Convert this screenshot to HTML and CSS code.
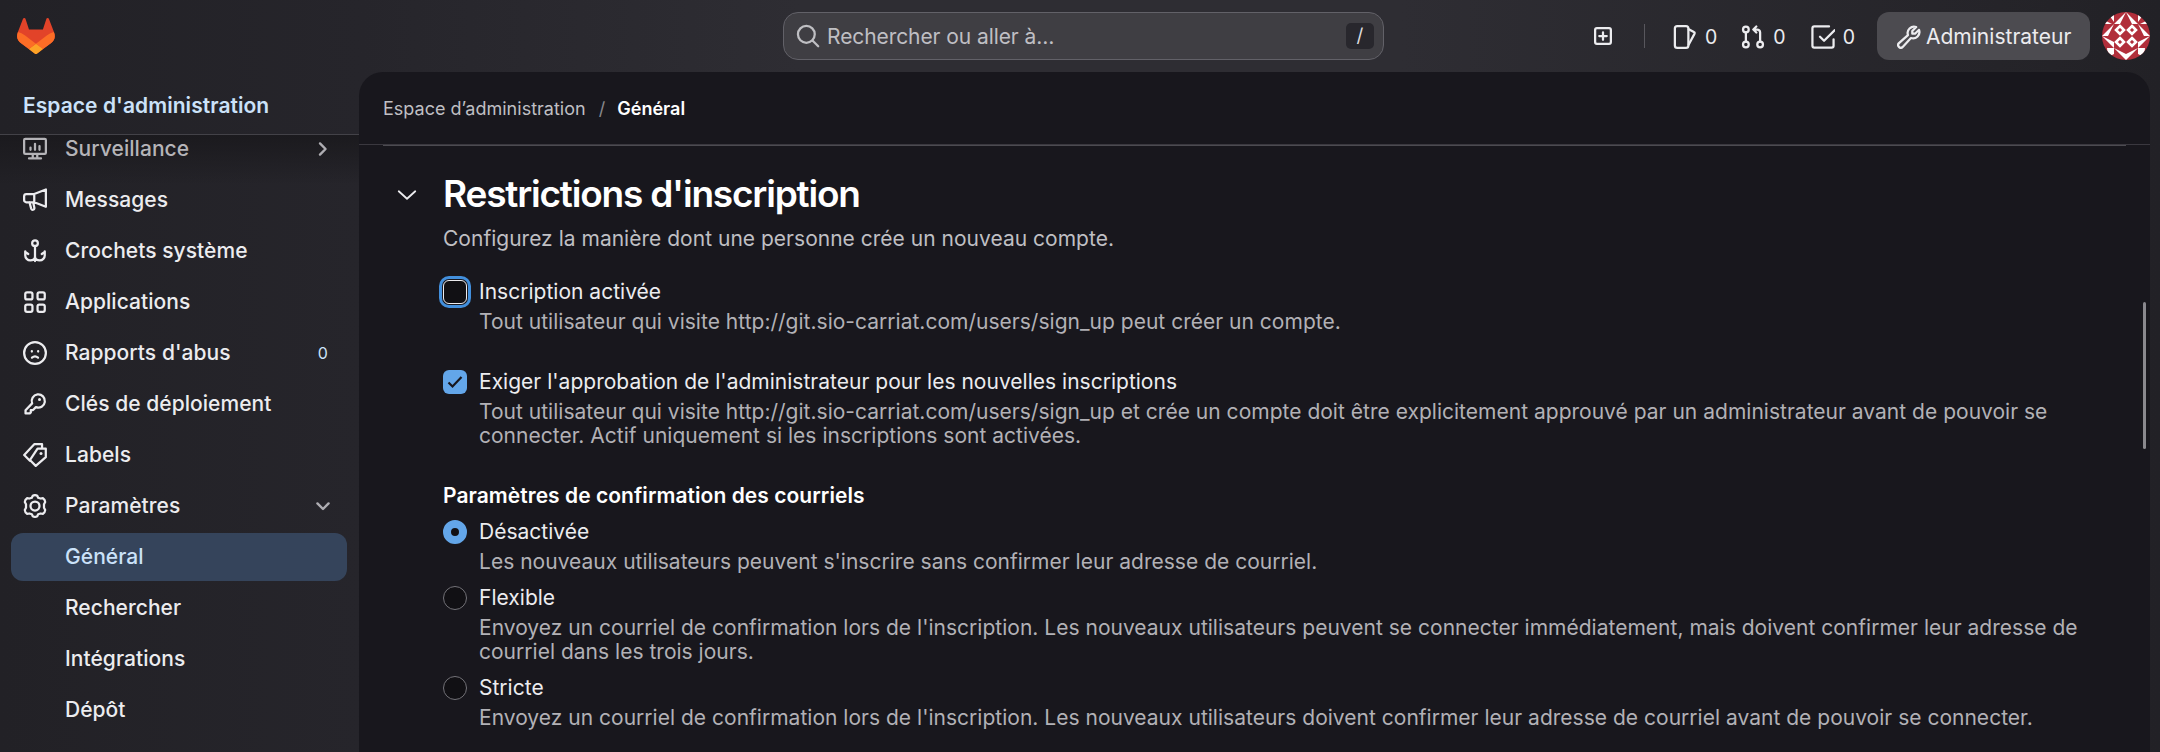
FILE: index.html
```html
<!DOCTYPE html>
<html lang="fr">
<head>
  <meta charset="UTF-8">
  <meta name="viewport" content="width=device-width, initial-scale=1.0">
  <title>Général · Espace d'administration · GitLab</title>
  <link rel="stylesheet" href="styles.css">
</head>
<body>
  <header class="topbar">
    <a class="logo" href="#">
      <svg viewBox="0 0 25 24" width="38" height="36"><path fill="#E24329" d="m24.507 9.5-.034-.09L21.082.562a.896.896 0 0 0-1.694.091l-2.29 7.01H7.825L5.535.653a.898.898 0 0 0-1.694-.09L.451 9.411.416 9.5a6.297 6.297 0 0 0 2.09 7.278l.012.01.03.022 5.16 3.867 2.56 1.935 1.554 1.176a1.051 1.051 0 0 0 1.268 0l1.555-1.176 2.56-1.935 5.197-3.89.014-.01A6.297 6.297 0 0 0 24.507 9.5Z"/><path fill="#FC6D26" d="m24.507 9.5-.034-.09a11.44 11.44 0 0 0-4.56 2.051l-7.447 5.632 4.742 3.584 5.197-3.89.014-.01A6.297 6.297 0 0 0 24.507 9.5Z"/><path fill="#FCA326" d="m7.707 20.677 2.56 1.935 1.555 1.176a1.051 1.051 0 0 0 1.268 0l1.555-1.176 2.56-1.935-4.743-3.584-4.755 3.584Z"/><path fill="#FC6D26" d="M5.01 11.461a11.43 11.43 0 0 0-4.56-2.05L.416 9.5a6.297 6.297 0 0 0 2.09 7.278l.012.01.03.022 5.16 3.867 4.745-3.584-7.444-5.632Z"/></svg>
    </a>
    <button class="search">
      <svg class="icon" viewBox="0 0 16 16"><circle cx="6.9" cy="6.9" r="5.6"/><path d="m11 11 3.8 3.8"/></svg>
      <span class="search-text">Rechercher ou aller à…</span>
      <kbd>/</kbd>
    </button>
    <div class="actions">
      <a class="plus" href="#"><svg class="icon" viewBox="0 0 16 16"><rect x="2.75" y="2.75" width="10.5" height="10.5" rx="1.2"/><path d="M8 5.5v5M5.5 8h5"/></svg></a>
      <span class="divider"></span>
      <a class="counter issues" href="#"><svg class="icon" viewBox="0 0 16 16"><rect x="1.25" y=".75" width="9" height="14.5" rx="1.6"/><path d="m10.5 2.8 3.4 1.9a.9.9 0 0 1 .4 1.2L10.5 13"/></svg>0</a>
      <a class="counter merges" href="#"><svg class="icon" viewBox="0 0 16 16"><circle cx="3.25" cy="3" r="1.9"/><circle cx="3.25" cy="13" r="1.9"/><circle cx="12.75" cy="13" r="1.9"/><path d="M3.25 4.9v6.2M12.75 11.1V5a2 2 0 0 0-2-2H8.6M10.2 1 8.2 3l2 2"/></svg>0</a>
      <a class="counter todos" href="#"><svg class="icon" viewBox="0 0 16 16"><path d="M12 .95H2.2A1.25 1.25 0 0 0 .95 2.2v11.6c0 .7.55 1.25 1.25 1.25h11.6c.7 0 1.25-.55 1.25-1.25V9.5M6 7.8l2.7 2.7 7-7"/></svg>0</a>
      <a class="admin" href="#"><svg class="icon" viewBox="0 0 16 16"><path d="M12.8 1.3a4.3 4.3 0 0 0-5.5 5.4L1.3 12.1a1.6 1.6 0 0 0 2.5 2.5l5.5-5.9a4.3 4.3 0 0 0 5.4-5.5L12 5.8h-1.8V4z"/></svg>Administrateur</a>
      <svg class="avatar" viewBox="0 0 48 48">
        <rect width="48" height="48" fill="#b12f3b"/>
        <g fill="#fff">
          <path d="M24 0 12 12h6zM24 0l12 12h-6zM12 36l12 6v6zM36 36l-12 6v6zM0 24h6l6-12zM48 24h-6l-6-12zM0 24l12 6v6zM48 24l-12 6v6z"/>
          <path d="M7 3l5-1v8zM2 8l8 4H1zM41 3l-5-1v8zM46 8l-8 4h9zM5 36h7v6l-6 3zM43 36h-7v6l6 3z"/>
        </g>
        <path fill="#b12f3b" stroke="#fff" stroke-width="2.6" d="m18 14 4 4-4 4-4-4zM30 14l4 4-4 4-4-4zM18 26l4 4-4 4-4-4zM30 26l4 4-4 4-4-4z"/>
      </svg>
    </div>
  </header>

  <div class="layout">
    <aside class="sidebar">
      <h2 class="sidebar-title">Espace d'administration</h2>
      <nav class="menu">
        <a class="item faded" href="#"><svg class="icon" viewBox="0 0 16 16"><rect x=".75" y="1.25" width="14.5" height="10" rx=".8"/><path d="M6.5 11.5V14M9.5 11.5V14M4 14.25h8M5 7v1.5M8 4.5v4M11 6v2.5"/></svg><span>Surveillance</span><svg class="chevron" viewBox="0 0 12 12"><path d="m4 2.3 3.7 3.7L4 9.7"/></svg></a>
        <a class="item" href="#"><svg class="icon" viewBox="0 0 16 16"><path d="M7.5 4 15.25 1v11.5L7.5 9.5H2.2A1.45 1.45 0 0 1 .75 8V5.5C.75 4.7 1.4 4 2.2 4zM7.5 4v5.5M4.3 9.5l1.2 4.4a1.1 1.1 0 0 0 2.1-.5L6.8 9.5"/></svg><span>Messages</span></a>
        <a class="item" href="#"><svg class="icon" viewBox="0 0 16 16"><circle cx="8" cy="2.75" r="1.9"/><path d="M8 4.7v10M1.5 8.2v2.6a3.4 3.4 0 0 0 3.4 3.5c1.7 0 3.1-1 3.1-2.6 0 1.6 1.4 2.6 3.1 2.6a3.4 3.4 0 0 0 3.4-3.5V8.2M1.5 8.7l2 1.3M14.5 8.7l-2 1.3"/></svg><span>Crochets système</span></a>
        <a class="item" href="#"><svg class="icon" viewBox="0 0 16 16"><rect x="1.5" y="1.5" width="4.8" height="4.8" rx="1.2"/><rect x="9.7" y="1.5" width="4.8" height="4.8" rx="1.2"/><rect x="1.5" y="9.7" width="4.8" height="4.8" rx="1.2"/><rect x="9.7" y="9.7" width="4.8" height="4.8" rx="1.2"/></svg><span>Applications</span></a>
        <a class="item" href="#"><svg class="icon" viewBox="0 0 16 16"><circle cx="8" cy="8" r="7.25"/><path d="M6 11.1q2-1.7 4 0M5.9 6.7v.3M10.1 6.7v.3"/></svg><span>Rapports d'abus</span><span class="badge">0</span></a>
        <a class="item" href="#"><svg class="icon" viewBox="0 0 16 16"><path d="M6.1 7.6a4.4 4.4 0 1 1 2.5 2.5L6.7 12H5.2v1.6l-.7.7H1.7v-2.1z"/><circle class="dot" cx="11" cy="5" r="1"/></svg><span>Clés de déploiement</span></a>
        <a class="item" href="#"><svg class="icon" viewBox="0 0 16 16"><path d="M4.6 11.8.8 8l6.7-7.2h5.2v2.6M9.7 3.75h5.5v5.7l-6.7 5.8-3.9-3.9z"/><circle class="dot" cx="12" cy="7" r="1"/></svg><span>Labels</span></a>
        <a class="item" href="#"><svg class="icon" viewBox="0 0 16 16"><path d="M6.5 1.2q1.5-.9 3 0l.6 1.3 1.6.5 1.6-.2q1.4.9 1.5 2.5l-.8 1.5v2.4l.8 1.5q-.1 1.6-1.5 2.5l-1.6-.2-1.6.5-.6 1.3q-1.5.9-3 0l-.6-1.3-1.6-.5-1.6.2q-1.4-.9-1.5-2.5L2 9.2V6.8l-.8-1.5q.1-1.6 1.5-2.5l1.6.2 1.6-.5z"/><circle cx="8" cy="8" r="3"/></svg><span>Paramètres</span><svg class="chevron" viewBox="0 0 12 12"><path d="M2.3 4.3 6 8l3.7-3.7"/></svg></a>
        <a class="item sub active" href="#">Général</a>
        <a class="item sub" href="#">Rechercher</a>
        <a class="item sub" href="#">Intégrations</a>
        <a class="item sub" href="#">Dépôt</a>
      </nav>
    </aside>

    <main class="panel">
      <div class="breadcrumbs"><a href="#">Espace d’administration</a><span class="slash">/</span><strong>Général</strong></div>
      <section class="settings">
        <svg class="icon toggle" viewBox="0 0 16 16"><path d="m2.5 5.5 5.5 5 5.5-5"/></svg>
        <div class="content">
          <h1>Restrictions d'inscription</h1>
          <p class="intro">Configurez la manière dont une personne crée un nouveau compte.</p>

          <div class="option spaced">
            <span class="box focus"></span>
            <div><p class="label">Inscription activée</p>
            <p class="help">Tout utilisateur qui visite http://git.sio-carriat.com/users/sign_up peut créer un compte.</p></div>
          </div>
          <div class="option spaced">
            <span class="box checked"><svg viewBox="0 0 24 24"><path d="m5.5 12.5 4 4 9-9.5"/></svg></span>
            <div><p class="label">Exiger l'approbation de l'administrateur pour les nouvelles inscriptions</p>
            <p class="help">Tout utilisateur qui visite http://git.sio-carriat.com/users/sign_up et crée un compte doit être explicitement approuvé par un administrateur avant de pouvoir se<br>connecter. Actif uniquement si les inscriptions sont activées.</p></div>
          </div>

          <h3>Paramètres de confirmation des courriels</h3>
          <div class="option">
            <span class="box radio selected"></span>
            <div><p class="label">Désactivée</p>
            <p class="help">Les nouveaux utilisateurs peuvent s'inscrire sans confirmer leur adresse de courriel.</p></div>
          </div>
          <div class="option">
            <span class="box radio"></span>
            <div><p class="label">Flexible</p>
            <p class="help">Envoyez un courriel de confirmation lors de l'inscription. Les nouveaux utilisateurs peuvent se connecter immédiatement, mais doivent confirmer leur adresse de<br>courriel dans les trois jours.</p></div>
          </div>
          <div class="option">
            <span class="box radio"></span>
            <div><p class="label">Stricte</p>
            <p class="help">Envoyez un courriel de confirmation lors de l'inscription. Les nouveaux utilisateurs doivent confirmer leur adresse de courriel avant de pouvoir se connecter.</p></div>
          </div>
        </div>
      </section>
      <span class="scrollbar"></span>
    </main>
  </div>
</body>
</html>
```
FILE: styles.css
```css
* {
  margin: 0;
  padding: 0;
  box-sizing: border-box;
}
body {
  height: 752px;
  overflow: hidden;
  font-family: Inter, "Liberation Sans", sans-serif;
  font-size: 21px;
  line-height: 30px;
  letter-spacing: 0.015px;
  color: #ececef;
  background: linear-gradient(90deg, #222126 0, #26252b 360px, #2e2d33 800px, #2e2d33 1400px, #252429 2000px, #222126 2160px);
}
a {
  color: inherit;
  text-decoration: none;
}
.icon {
  width: 24px;
  height: 24px;
  flex: none;
  fill: none;
  stroke: currentColor;
  stroke-width: 1.5;
  stroke-linecap: round;
  stroke-linejoin: round;
}
.icon .dot {
  fill: currentColor;
  stroke: none;
}

/* top bar */
.topbar {
  height: 72px;
  display: grid;
  grid-template-columns: 783px 601px 1fr;
  align-items: center;
}
.logo {
  padding-left: 17px;
}
.logo svg {
  display: block;
}
.search {
  height: 48px;
  display: flex;
  align-items: center;
  padding: 0 9px 0 12px;
  border: 1px solid #626168;
  border-radius: 15px;
  background: #3f3e43;
  color: #bfbfc3;
  font: inherit;
}
.search-text {
  flex: 1;
  margin-left: 7px;
  padding-top: 1px;
  text-align: left;
  letter-spacing: -0.08px;
}
kbd {
  width: 28px;
  height: 26px;
  border-radius: 5px;
  background: #28272d;
  color: #dcdcde;
  font: 19px/26px Inter, sans-serif;
  text-align: center;
}
.actions {
  display: flex;
  align-items: center;
  padding-left: 207px;
}
.plus,
.counter,
.admin {
  display: flex;
  align-items: center;
}
.divider {
  width: 1px;
  height: 24px;
  margin: 0 28px 0 29px;
  background: #58575d;
}
.counter {
  gap: 8px;
  padding-top: 1px;
  font-size: 19.5px;
}
.merges {
  margin-left: 24px;
}
.todos {
  margin-left: 25px;
}
.admin {
  width: 213px;
  height: 48px;
  margin-left: 22px;
  padding: 1px 0 0 20px;
  gap: 5px;
  border-radius: 12px;
  background: #4c4b50;
}
.avatar {
  width: 48px;
  height: 48px;
  margin-left: 12px;
  border-radius: 50%;
}

/* sidebar */
.layout {
  display: grid;
  grid-template-columns: 359px 1791px;
  height: 680px;
}
.sidebar-title {
  height: 63px;
  padding: 18px 23px 0;
  border-bottom: 1px solid #434248;
  font-size: 21px;
  line-height: 32px;
  font-weight: 600;
  letter-spacing: 0.05px;
  color: #cbe2f9;
}
.menu {
  height: 617px;
  padding: 0 12px 0 11px;
  overflow: hidden;
  background: linear-gradient(#1b1a1e, transparent 50px);
}
.item {
  display: flex;
  align-items: center;
  height: 48px;
  margin-bottom: 3px;
  padding: 0 12px;
  border-radius: 12px;
  font-weight: 500;
  letter-spacing: 0.05px;
}
.item span {
  flex: 1;
  margin-left: 18px;
}
.faded {
  margin-top: -10px;
  color: #b5b4b8;
}
.chevron {
  width: 18px;
  height: 18px;
  margin-right: 3px;
  fill: none;
  stroke: #aeadb2;
  stroke-width: 1.6;
  stroke-linecap: round;
  stroke-linejoin: round;
}
.item .badge {
  flex: none;
  margin-right: 7px;
  font-size: 16px;
  font-weight: 400;
  color: #cbe2f9;
}
.sub {
  padding-left: 54px;
}
.active {
  background: #35445b;
  color: #cbe2f9;
}

/* settings */
.panel {
  position: relative;
  border-radius: 24px 24px 0 0;
  background: #18171d;
}
.breadcrumbs {
  height: 73px;
  display: flex;
  align-items: center;
  padding: 2px 0 0 24px;
  border-bottom: 1px solid #3a383f;
  font-size: 18px;
  color: #bfbfc3;
}
.breadcrumbs strong {
  font-weight: 600;
  color: #fff;
}
.slash {
  margin: 0 12px 0 13px;
  color: #89888d;
}
.settings {
  display: flex;
  margin: 0 24px;
  border-top: 1px solid #4c4b51;
}
.toggle {
  margin: 37px 24px 0 12px;
  stroke-width: 1.2;
}
.content {
  flex: 1;
  padding-top: 27px;
}
h1 {
  font-size: 37px;
  line-height: 42px;
  font-weight: 600;
  letter-spacing: -1.2px;
  color: #fff;
}
.intro {
  margin: 9px 0 23px;
  color: #bfbfc3;
}
.option {
  display: flex;
  gap: 12px;
  margin-bottom: 6px;
}
.spaced {
  margin-bottom: 30px;
}
.box {
  width: 24px;
  height: 24px;
  margin-top: 3px;
  flex: none;
  border: 1px solid #737278;
  border-radius: 6px;
  background: #111014;
}
.focus {
  border-color: #ececef;
  box-shadow: 0 0 0 1px #18171d, 0 0 0 4px #428fdc;
}
.checked {
  border: 0;
  background: #63a6e9;
}
.checked svg {
  display: block;
  fill: none;
  stroke: #18171d;
  stroke-width: 2.2;
}
.radio {
  border-radius: 50%;
}
.selected {
  border: 8px solid #63a6e9;
}
.label {
  color: #ececef;
}
.help {
  line-height: 24px;
  padding: 3px 0;
  color: #b2b1b6;
}
h3 {
  margin-bottom: 6px;
  font-size: 21px;
  line-height: 30px;
  font-weight: 600;
  letter-spacing: 0.05px;
  color: #fff;
}
.scrollbar {
  position: absolute;
  top: 230px;
  right: 4px;
  width: 3px;
  height: 147px;
  border-radius: 2px;
  background: #89888d;
}
```
